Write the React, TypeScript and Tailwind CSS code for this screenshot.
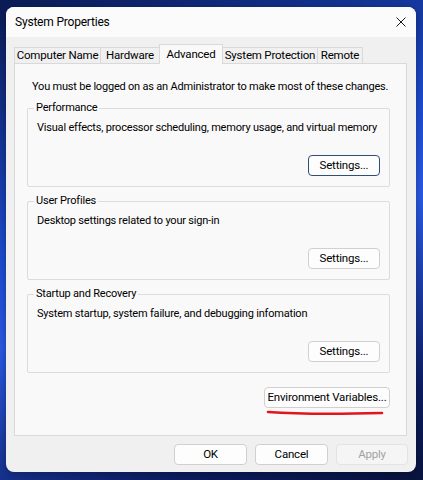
const font = { fontFamily: 'Roboto, "Liberation Sans", sans-serif' };

const tabs = [
  { name: "Computer Name", width: "w-[87px]" },
  { name: "Hardware", width: "w-[60px]" },
  { name: "Advanced", width: "w-[64px]" },
  { name: "System Protection", width: "w-[96px]" },
  { name: "Remote", width: "w-[46px]" }
];

function WinButton({
  label,
  isDefault = false,
  disabled = false,
  width = "w-[72px]"
}: {
  label: string;
  isDefault?: boolean;
  disabled?: boolean;
  width?: string;
}) {
  return (
    <button
      type="button"
      disabled={disabled}
      className={`${width} h-[21px] whitespace-nowrap rounded-[4px] border text-[11.5px] leading-[19px] tracking-[-0.2px] ${
        isDefault
          ? "border-[#2f4f7a] bg-[#fdfdfd] text-black"
          : disabled
            ? "border-[#e3e3e3] bg-[#f5f5f5] text-[#a2a2a2]"
            : "border-[#d0d0d0] bg-[#fdfdfd] text-black"
      }`}
    >
      {label}
    </button>
  );
}

function GroupBox({
  title,
  description,
  isDefault = false
}: {
  title: string;
  description: string;
  isDefault?: boolean;
}) {
  return (
    <fieldset className="h-[87px] min-w-0 rounded-[2px] border border-[#dcdcdc] px-[9px]">
      <legend className="ml-[-3px] whitespace-nowrap px-[2px] text-[11px] leading-[16px] tracking-[-0.2px]">
        {title}
      </legend>
      <p className="mt-[4px] whitespace-nowrap text-[11px] leading-[16px] tracking-[-0.2px]">{description}</p>
      <div className="mt-[19px] flex justify-end">
        <WinButton label="Settings..." isDefault={isDefault} />
      </div>
    </fieldset>
  );
}

export default function App() {
  return (
    <div
      className="h-[480px] w-[423px] overflow-hidden bg-[linear-gradient(160deg,#0b1b55_0%,#1c4bd0_40%,#2a5be8_55%,#0c1e64_85%,#08133f_100%)] pl-[6px] pt-[7px] text-black"
      style={font}
    >
      <div className="flex h-[465px] w-[410px] flex-col overflow-hidden rounded-[8px] bg-[#f0f0f0] shadow-[0_2px_10px_rgba(0,0,0,0.35)]">
        <div className="flex h-[30px] items-center justify-between bg-[#fbfbfb] pl-[9px] pr-[10px]">
          <span className="text-[12px] tracking-[-0.2px]">System Properties</span>
          <svg width="10" height="10" viewBox="0 0 10 10" className="mt-[-1px]">
            <path d="M0.5 0.5 L9.5 9.5 M9.5 0.5 L0.5 9.5" stroke="#1a1a1a" strokeWidth="1" />
          </svg>
        </div>

        <div className="flex flex-col px-[8px]">
          <div className="mt-[7px] flex h-[19px] items-end">
            {tabs.map((tab) => {
              const selected = tab.name === "Advanced";
              return (
                <div
                  key={tab.name}
                  className={`${tab.width} -ml-px flex shrink-0 justify-center whitespace-nowrap border border-b-0 border-[#d9d9d9] text-[11.5px] tracking-[-0.2px] first:ml-0 ${
                    selected
                      ? "relative z-10 mb-[-1px] h-[20px] items-start bg-[#f9f9f9] pt-[1px]"
                      : "h-[16px] items-center bg-[#f0f0f0]"
                  }`}
                >
                  {tab.name}
                </div>
              );
            })}
          </div>

          <div className="flex h-[373px] w-[393px] flex-col border border-[#d9d9d9] bg-[#f9f9f9] px-[12px]">
            <p className="mt-[15px] whitespace-nowrap pl-[5px] text-[11px] leading-[16px] tracking-[-0.2px]">
              You must be logged on as an Administrator to make most of these changes.
            </p>
            <div className="mt-[5px] flex w-[363px] flex-col gap-[6px]">
              <GroupBox
                title="Performance"
                description="Visual effects, processor scheduling, memory usage, and virtual memory"
                isDefault
              />
              <GroupBox title="User Profiles" description="Desktop settings related to your sign-in" />
              <GroupBox
                title="Startup and Recovery"
                description="System startup, system failure, and debugging infomation"
              />
            </div>
            <div className="mt-[14px] flex w-[363px] flex-col items-end">
              <WinButton label="Environment Variables..." width="w-[126px]" />
              <svg width="118" height="6" viewBox="0 0 118 6" className="mr-[6px] mt-[2px]">
                <path
                  d="M2 2 C 30 4, 60 4.5, 116 3"
                  stroke="#e0161e"
                  strokeWidth="2.6"
                  fill="none"
                  strokeLinecap="round"
                />
              </svg>
            </div>
          </div>

          <div className="mt-[8px] flex justify-end gap-[8px]">
            <WinButton label="OK" width="w-[73px]" />
            <WinButton label="Cancel" width="w-[73px]" />
            <WinButton label="Apply" width="w-[72px]" disabled />
          </div>
        </div>
      </div>
    </div>
  );
}
